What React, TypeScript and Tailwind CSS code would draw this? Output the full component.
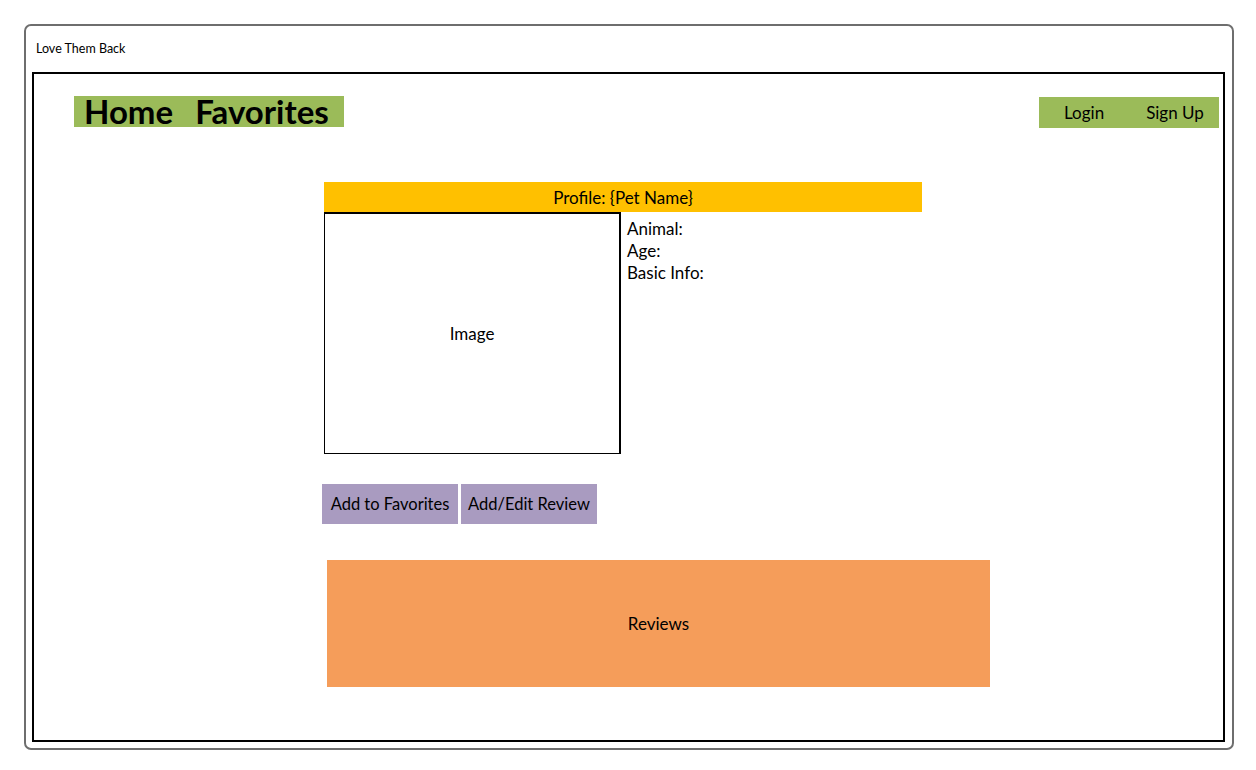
import React from "react";

export default function App() {
  const font = { fontFamily: "Lato, 'Open Sans', sans-serif" };
  return (
    <div className="w-[1256px] h-[770px] bg-white text-black" style={font}>
      <div className="pt-[24px] pl-[24px]">
        <div className="w-[1210px] h-[726px] border-2 border-[#6e6e6e] rounded-[7px] flex flex-col">
          <div className="h-[46px] flex items-center pl-[10px] text-[12.5px] leading-none">
            Love Them Back
          </div>
          <div className="ml-[6px] w-[1193px] h-[670px] border-2 border-black flex flex-col">
            {/* nav */}
            <div className="flex justify-between items-start pt-[22px] pl-[40px] pr-[4px]">
              <div className="w-[270px] h-[31px] bg-[#9BBB59] flex items-center pl-[10px] gap-[22px] text-[33px] font-bold leading-none">
                <span>Home</span>
                <span>Favorites</span>
              </div>
              <div className="mt-[1px] w-[180px] h-[31px] bg-[#9BBB59] flex items-center pl-[25px] gap-[42px] text-[17px] leading-none">
                <span>Login</span>
                <span>Sign Up</span>
              </div>
            </div>

            {/* profile */}
            <div className="ml-[290px] mt-[54px] w-[598px] flex flex-col">
              <div className="h-[30px] bg-[#FFC000] flex items-center justify-center text-[17px] leading-none">
                Profile: {"{"}Pet Name{"}"}
              </div>
              <div className="flex">
                <div className="w-[297px] h-[242px] border-l border-b-[1.5px] border-t-2 border-r-2 border-black flex items-center justify-center text-[17px]">
                  Image
                </div>
                <div className="pl-[6px] pt-[6px] text-[17px] leading-[22px]">
                  <div>Animal:</div>
                  <div>Age:</div>
                  <div>Basic Info:</div>
                </div>
              </div>
            </div>

            {/* buttons */}
            <div className="ml-[288px] mt-[30px] flex gap-[3px]">
              <div className="w-[136px] h-[40px] bg-[#A99BC0] flex items-center justify-center text-[16.5px] leading-none">
                Add to Favorites
              </div>
              <div className="w-[136px] h-[40px] bg-[#A99BC0] flex items-center justify-center text-[16.5px] leading-none">
                Add/Edit Review
              </div>
            </div>

            {/* reviews */}
            <div className="ml-[293px] mt-[36px] w-[663px] h-[127px] bg-[#F59D5A] flex items-center justify-center text-[17px] leading-none">
              Reviews
            </div>
          </div>
        </div>
      </div>
    </div>
  );
}
